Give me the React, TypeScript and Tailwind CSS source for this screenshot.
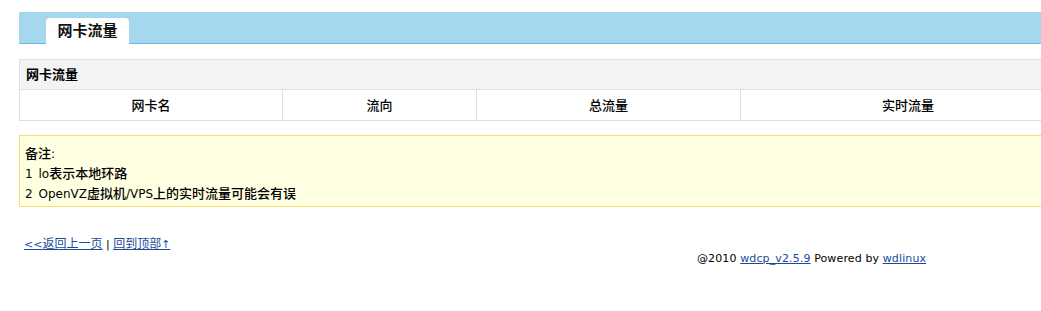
function C({ children }: { children: React.ReactNode }) {
  return <span className="text-[13px]">{children}</span>;
}

export default function App() {
  const font = { fontFamily: '"DejaVu Sans", Verdana, "Noto Sans CJK SC", sans-serif' };
  return (
    <div className="w-[1041px] h-[311px] bg-white overflow-hidden text-[#000]" style={font}>
      <div className="pt-[12px] pl-[19px]">
        <div className="h-[32px] bg-[#a5d8ee] border-b border-[#6db8e2] flex items-end pl-[27px]">
          <div className="bg-white rounded-t-[4px] h-[26px] -mb-px w-[83px] flex items-center justify-center font-bold text-[15px] text-[#111]">
            网卡流量
          </div>
        </div>
        <div className="mt-[15px] border-t border-b border-l border-[#dfe0e4]">
          <div className="h-[30px] bg-[#f2f3f5] flex items-center pl-[6px] pt-px font-bold text-[13px] border-b border-[#dfe0e4]">
            网卡流量
          </div>
          <div className="flex h-[30px] text-[13px] font-medium">
            <div className="w-[263px] shrink-0 border-r border-[#dfe0e4] flex items-center justify-center pt-[2px]">网卡名</div>
            <div className="w-[194px] shrink-0 border-r border-[#dfe0e4] flex items-center justify-center pt-[2px]">流向</div>
            <div className="w-[264px] shrink-0 border-r border-[#dfe0e4] flex items-center justify-center pt-[2px]">总流量</div>
            <div className="w-[334px] shrink-0 flex items-center justify-center pt-[2px]">实时流量</div>
          </div>
        </div>
        <div className="mt-[14px] h-[72px] bg-[#ffffe1] border-t border-b border-l border-[#f8dc74] pl-[5px] pt-[8px] text-[12px] leading-[19px] font-medium">
          <div><C>备注</C>:</div>
          <div>1 <span className="ml-[2px]">lo</span><C>表示本地环路</C></div>
          <div>2 <span className="ml-[2px]">OpenVZ</span><C>虚拟机</C>/VPS<C>上的实时流量可能会有误</C></div>
        </div>
        <div className="mt-[30px] pl-[5px] text-[11px] leading-[14px]">
          <a href="#" className="text-[#1b4a9a] underline">&lt;&lt;<span className="text-[12px]">返回上一页</span></a>
          <span> | </span>
          <a href="#" className="text-[#1b4a9a] underline"><span className="text-[12px]">回到顶部</span>↑</a>
        </div>
        <div className="pl-[678px] text-[11px] leading-[14px] tracking-[0.12px]">
          @2010 <a href="#" className="text-[#1b4a9a] underline">wdcp_v2.5.9</a> Powered by <a href="#" className="text-[#1b4a9a] underline">wdlinux</a>
        </div>
      </div>
    </div>
  );
}
